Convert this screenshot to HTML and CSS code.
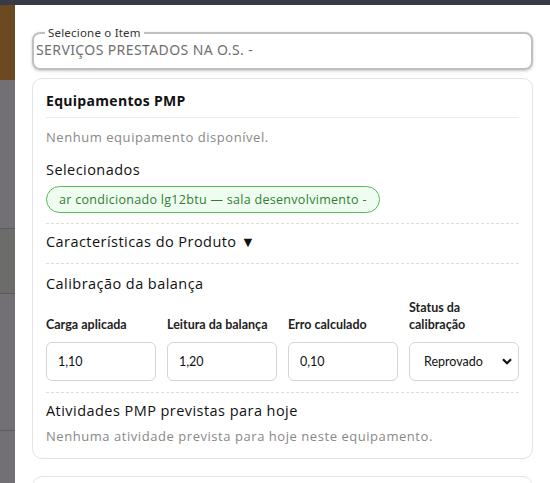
FILE: index.html
```html
<!DOCTYPE html>
<html lang="pt-BR">
<head>
<meta charset="utf-8">
<title>Equipamentos PMP</title>
<link rel="stylesheet" href="styles.css">
</head>
<body>
<div class="topbar"></div>
<div class="layout">
  <aside class="side">
    <div class="side-brand"></div>
    <div class="side-row side-row--a"></div>
    <div class="side-row side-row--active"></div>
    <div class="side-row side-row--b"></div>
    <div class="side-row side-row--c"></div>
  </aside>
  <main class="panel">
    <fieldset class="item-select">
      <legend class="item-select__legend">Selecione o Item</legend>
      <div class="item-select__value">SERVIÇOS PRESTADOS NA O.S. -</div>
    </fieldset>

    <section class="card">
      <h2 class="card__title">Equipamentos PMP</h2>
      <p class="muted muted--first">Nenhum equipamento disponível.</p>

      <h3 class="subtitle subtitle--selected">Selecionados</h3>
      <div class="chips">
        <span class="chip">ar condicionado lg12btu — sala desenvolvimento -</span>
      </div>

      <div class="block">
        <h3 class="subtitle">Características do Produto ▼</h3>
      </div>

      <div class="block block--calib">
        <h3 class="subtitle">Calibração da balança</h3>
        <div class="calib-grid">
          <label class="field">
            <span class="field__label">Carga aplicada</span>
            <input class="field__input" type="text" value="1,10">
          </label>
          <label class="field">
            <span class="field__label">Leitura da balança</span>
            <input class="field__input" type="text" value="1,20">
          </label>
          <label class="field">
            <span class="field__label">Erro calculado</span>
            <input class="field__input" type="text" value="0,10">
          </label>
          <label class="field">
            <span class="field__label field__label--narrow">Status da calibração</span>
            <select class="field__input field__select">
              <option>Aprovado</option>
              <option selected>Reprovado</option>
            </select>
          </label>
        </div>
      </div>

      <div class="block">
        <h3 class="subtitle">Atividades PMP previstas para hoje</h3>
        <p class="muted muted--acts">Nenhuma atividade prevista para hoje neste equipamento.</p>
      </div>
    </section>

    <section class="card card--next"></section>
  </main>
</div>
</body>
</html>
```

FILE: styles.css
```css
* { box-sizing: border-box; }

html, body {
  margin: 0;
  padding: 0;
  height: 100%;
  overflow: hidden;
  background: #ffffff;
  font-family: "Open Sans", "Noto Sans", sans-serif;
  color: #111;
}

.topbar {
  height: 5px;
  background: #383b44;
}

.layout {
  display: flex;
  height: calc(100% - 5px);
  overflow: hidden;
}

/* dimmed sidebar peeking at the left edge */
.side {
  width: 15px;
  flex: none;
  display: flex;
  flex-direction: column;
  background: #727075;
}
.side-brand { height: 75px; background: #6b4a22; }
.side-row { border-bottom: 1px solid #5c5b5f; }
.side-row--a { height: 149px; }
.side-row--active { height: 65px; background: #6c6c6a; }
.side-row--b { height: 137px; }
.side-row--c { flex: 1; border-bottom: 0; }

.panel {
  flex: 1;
  padding: 21px 17px 0 17px;
  min-width: 0;
}

/* outlined select-like box with floating legend */
.item-select {
  margin: 0;
  padding: 0 0 8px 3px;
  border: 2px solid #c0c0c0;
  border-radius: 8px;
  box-shadow: 0 1px 3px rgba(0, 0, 0, 0.22);
  height: 44px;
}
.item-select__legend {
  margin-left: 8px;
  padding: 0 3px;
  font-family: "Noto Sans", sans-serif;
  font-size: 11.5px;
  line-height: 13px;
  color: #333;
  letter-spacing: 0.2px;
}
.item-select__value {
  font-family: "Noto Sans", sans-serif;
  font-size: 14px;
  line-height: 20px;
  color: #6f6f6f;
  margin-top: 1px;
  margin-left: -1px;
  letter-spacing: 0.4px;
}

.card {
  margin-top: 8px;
  border: 1px solid #e3e3e3;
  border-radius: 10px;
  padding: 11px 13px 12px 13px;
}
.card--next {
  margin-top: 17px;
  height: 40px;
}

.card__title {
  margin: 0;
  font-size: 14px;
  line-height: 22px;
  font-weight: 700;
  letter-spacing: 0.3px;
  color: #111;
  padding-bottom: 5px;
  border-bottom: 1px solid #ececec;
}

.muted {
  margin: 0;
  font-size: 13px;
  line-height: 20px;
  color: #888;
  letter-spacing: 0.55px;
}
.muted--first { margin-top: 9px; }
.muted--acts { margin-top: 5px; }

.subtitle {
  margin: 0;
  font-size: 14.5px;
  line-height: 20px;
  font-weight: 500;
  letter-spacing: 0.45px;
  color: #111;
}
.subtitle--selected { margin-top: 13px; }

.chips {
  margin-top: 6px;
  display: flex;
}
.chip {
  display: inline-block;
  height: 27px;
  padding: 0 12px;
  line-height: 25px;
  border: 1px solid #58b85c;
  border-radius: 14px;
  background: #effdf1;
  color: #2f7d32;
  font-size: 12.5px;
  letter-spacing: 0.3px;
  white-space: nowrap;
}

/* sections separated by a dashed rule */
.block {
  margin-top: 10px;
  padding-top: 8px;
  border-top: 1px dashed #dedede;
}
.block--calib {
  margin-top: 11px;
  padding-top: 10px;
}

.calib-grid {
  margin-top: 5px;
  margin-bottom: 11px;
  display: grid;
  grid-template-columns: repeat(4, 1fr);
  column-gap: 11px;
}

.field {
  display: flex;
  flex-direction: column;
  justify-content: flex-end;
}
.field__label {
  font-family: "Lato", "Noto Sans", sans-serif;
  font-weight: 700;
  font-size: 12.5px;
  line-height: 17px;
  color: #222;
  white-space: nowrap;
}
.field__label--narrow {
  white-space: normal;
  padding-right: 30px;
}
.field__input {
  margin-top: 9px;
  height: 39px;
  width: 100%;
  border: 1px solid #d4d4d4;
  border-radius: 6px;
  padding: 0 11px;
  font-family: "Lato", "Noto Sans", sans-serif;
  font-size: 12.5px;
  color: #111;
  background: #fff;
  outline: none;
}
.field__select {
  appearance: none;
  -webkit-appearance: none;
  padding-left: 14px;
  background-image: url("data:image/svg+xml;utf8,<svg xmlns='http://www.w3.org/2000/svg' width='10' height='7' viewBox='0 0 10 7'><path d='M1 1.2 5 5.2 9 1.2' fill='none' stroke='%23111' stroke-width='2.2'/></svg>");
  background-repeat: no-repeat;
  background-position: right 6px center;
}
```
